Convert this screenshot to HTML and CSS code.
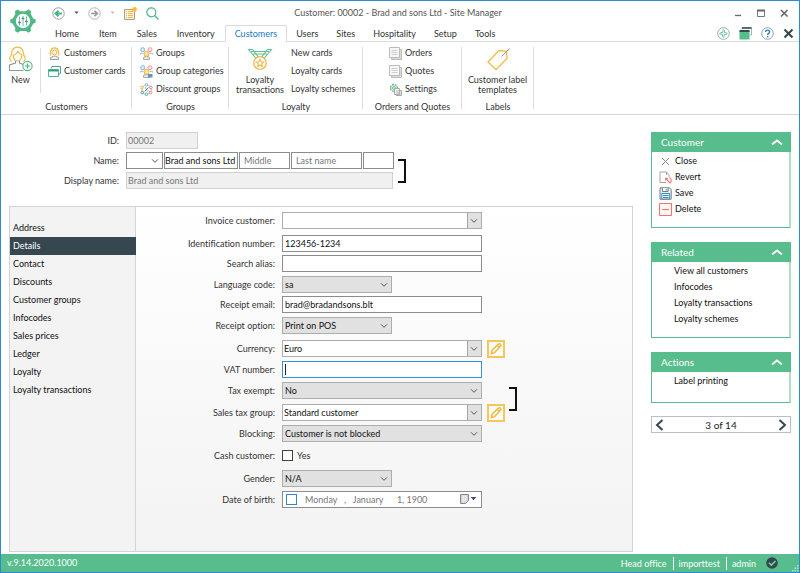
FILE: index.html
```html
<!DOCTYPE html>
<html lang="en">
<head>
<meta charset="utf-8">
<title>Customer: 00002 - Brad and sons Ltd - Site Manager</title>
<link rel="stylesheet" href="styles.css">
</head>
<body>
<svg class="sprite" aria-hidden="true">
  <symbol id="chevron" viewBox="0 0 8 8"><path d="M1 2.3l3 3 3-3" fill="none" stroke="#555" stroke-width="1"/></symbol>
  <symbol id="collapse" viewBox="0 0 12 8"><path d="M1 6.5l5-4 5 4" fill="none" stroke="#fff" stroke-width="1.8"/></symbol>
  <symbol id="pencil" viewBox="0 0 18 18"><path d="M3 15l1-4.500 8-7.800c2-1.500 4.300.9 2.800 2.900l-7.600 8z M10.800 4.500l2.600 2.600" fill="none" stroke="#f5b93a" stroke-width="1.900"/></symbol>
  <symbol id="sheets" viewBox="0 0 13 13"><path d="M2.500 2.500h10v10h-10z" fill="#dcdcdc" stroke="#bbb"/><path d="M.5.500h10v10H.5z" fill="#f7f7f7" stroke="#bbb"/><path d="M2.500 3.500h6M2.500 5.500h6M2.500 7.500h6" stroke="#d0d0d0"/></symbol>
  <symbol id="people" viewBox="0 0 13 13"><circle cx="2.700" cy="2.700" r="2" fill="#e3f2fa" stroke="#7cb8d4"/><circle cx="10" cy="2.700" r="2" fill="#fde8e8" stroke="#f19a98"/><path d="M.5 7.500V6.300h3M12.500 7.500V6.300h-3" fill="none" stroke="#9fbccb"/><path d="M4.300 9.200V6.500a2.200 2.200 0 0 1 4.400 0v2.700z" fill="#ffe3a0" stroke="#f2b63d"/><path d="M3.500 12.500v-2l3-1 3 1v2z" fill="#eee" stroke="#aaa"/></symbol>
</svg>
<div class="window">
  <header class="header">
    <svg class="logo" viewBox="0 0 26 26"><path d="M7.700 1.500l2.400 1.800h5.800l2.400-1.800 2.700 1.600-.3 3 2.500 4.300 2.500 1.200v3l-2.500 1.200-2.500 4.300.3 3-2.700 1.600-2.400-1.800h-5.800l-2.400 1.800L5 23.100l.3-3-2.500-4.300-2.500-1.200v-3l2.500-1.200 2.500-4.300-.3-3z" fill="#4fb886"/><circle cx="13" cy="13" r="7.200" fill="#fff"/><path d="M9.500 8.500v9M13 8v10M16.500 8.500v9" stroke="#6cc09c" stroke-width="1"/><path d="M8.200 14.500h2.600M11.700 10.500h2.600M15.200 13.500h2.600" stroke="#557f79" stroke-width="1.600"/></svg>
    <div class="header-main">
      <div class="titlebar">
        <div class="quick">
          <button aria-label="Back"><svg width="13" height="13" viewBox="0 0 13 13"><circle cx="6.500" cy="6.500" r="5.700" fill="#fff" stroke="#8b9499" stroke-width=".9"/><path d="M10 6.500H4M6.500 3.800L3.600 6.500l2.900 2.700" fill="none" stroke="#3fb57c" stroke-width="1.900"/></svg></button>
          <svg width="5" height="4" viewBox="0 0 5 4"><path d="M.5.500h4L2.500 3z" fill="#555"/></svg>
          <button aria-label="Forward"><svg width="13" height="13" viewBox="0 0 13 13"><circle cx="6.500" cy="6.500" r="5.700" fill="#fff" stroke="#aaa" stroke-width=".9"/><path d="M3 6.500h6M6.500 3.800l2.900 2.700-2.900 2.700" fill="none" stroke="#999" stroke-width="1.700"/></svg></button>
          <svg width="5" height="4" viewBox="0 0 5 4"><path d="M.5.500h4L2.500 3z" fill="#bbb"/></svg>
          <button aria-label="List"><svg width="13" height="13" viewBox="0 0 13 13"><path d="M.5 2.500h10v10H.5z" fill="#fff5dc" stroke="#a9a08b"/><path d="M2 4.500h1M2 6.500h1M2 8.500h1M2 10.500h1M4 4.500h5M4 6.500h5M4 8.500h5M4 10.500h5" stroke="#f0b84a"/><circle cx="10.500" cy="2.500" r="2.400" fill="#f7bb3f"/></svg></button>
          <button aria-label="Search"><svg width="13" height="13" viewBox="0 0 13 13"><circle cx="5.300" cy="5.300" r="4.500" fill="none" stroke="#48b688" stroke-width="1.200"/><path d="M8.500 8.500l4 4" stroke="#48b688" stroke-width="1.300"/></svg></button>
        </div>
        <div class="title">Customer: 00002 - Brad and sons Ltd - Site Manager</div>
        <div class="winctl">
          <button aria-label="Minimize"><svg width="9" height="9" viewBox="0 0 9 9"><path d="M1 6.500h6" stroke="#666" stroke-width="1.300"/></svg></button>
          <button aria-label="Maximize"><svg width="9" height="9" viewBox="0 0 9 9"><path d="M.5 1.500h7v6h-7z" fill="none" stroke="#777"/><path d="M0 1.500h8" stroke="#666" stroke-width="2"/></svg></button>
          <button aria-label="Close"><svg width="9" height="9" viewBox="0 0 9 9"><path d="M1 1l6.500 6.500M7.500 1L1 7.500" stroke="#666" stroke-width="1.600"/></svg></button>
        </div>
      </div>
      <div class="tabrow">
        <nav class="tabs">
          <a href="#">Home</a><a href="#">Item</a><a href="#">Sales</a><a href="#">Inventory</a><a href="#" class="active">Customers</a><a href="#">Users</a><a href="#">Sites</a><a href="#">Hospitality</a><a href="#">Setup</a><a href="#">Tools</a>
        </nav>
        <div class="tools">
          <button aria-label="Sync"><svg width="13" height="13" viewBox="0 0 13 13"><circle cx="6.500" cy="6.500" r="5.800" fill="#fff" stroke="#8fa79d" stroke-width=".9"/><path d="M6.300 2.300L5.600 5.600H3.300M2.300 6.700l3.300.7v2.300M6.700 10.700l.7-3.300h2.300M10.700 6.300l-3.300-.7V3.300" fill="none" stroke="#53bd8c" stroke-width=".9"/></svg></button>
          <button aria-label="Windows"><svg width="13" height="13" viewBox="0 0 13 13"><path d="M3 2.500V.8h9.500V8H10.500" fill="#fff" stroke="#8aa" stroke-width=".8"/><path d="M3 1h9.500" stroke="#37474f" stroke-width="1.500"/><path d="M.5 4h10v8.500H.5z" fill="#57bd8d"/><path d="M.5 4h10" stroke="#37474f" stroke-width="2"/></svg></button>
          <button aria-label="Help"><svg width="13" height="13" viewBox="0 0 13 13"><circle cx="6.500" cy="6.500" r="5.800" fill="#fff" stroke="#84959d" stroke-width=".9"/><path d="M4.600 5c0-2.500 4-2.400 4-.1 0 1.500-2 1.400-2 3" fill="none" stroke="#2f80b8" stroke-width="1.400"/><path d="M5.900 9.700h1.500" stroke="#2f80b8" stroke-width="1.400"/></svg></button>
          <button aria-label="Close view"><svg width="11" height="11" viewBox="0 0 11 11"><path d="M1.500 1.500l8 8M9.500 1.500l-8 8" stroke="#37474f" stroke-width="2.100"/></svg></button>
        </div>
      </div>
    </div>
  </header>

  <div class="ribbon">
    <section class="group g-customers">
      <div class="group-body">
        <button class="big"><svg width="26" height="26" viewBox="0 0 26 26"><path d="M3.500 15.500C1.500 14 1 11 3.300 9.300 3.500 4 6 1.200 9.500 1.200S15.600 4 15.800 9.300c2.200 1.700 1.700 4.700-.3 6.200M5.300 8.500c0 4 1.500 6.500 4.200 6.500s4.300-2.500 4.300-6.500M5.200 9c3-.2 4-2 4.800-3.500 1 1.700 2 2.800 3.900 3.300" fill="none" stroke="#f2b84b" stroke-width="1.200"/><path d="M7.500 15v2L1.500 19v5.500h14M11.500 15v2l4 1.500" fill="none" stroke="#8e979b" stroke-width="1.100"/><circle cx="19.500" cy="20" r="4.600" fill="#fff" stroke="#4db98a" stroke-width="1.100"/><path d="M17 20h5M19.500 17.500v5" stroke="#4db98a" stroke-width="1.200"/></svg><span>New</span></button>
        <div class="col divided">
          <button class="item"><svg width="13" height="13" viewBox="0 0 13 13"><path d="M2.500 8.500C1.500 7 2.500 5 2.800 4 3 2 4.500.8 6.500.8S10 2 10.200 4c.3 1 1.300 3 .3 4.500" fill="#fff3d6" stroke="#f2b84b" stroke-width="1.200"/><circle cx="6.500" cy="5.500" r="2.300" fill="#fff" stroke="#f2b84b"/><path d="M2.500 12.500v-2l3-1.300h2l3 1.300v2z" fill="#eee" stroke="#8e979b" stroke-width=".9"/></svg>Customers</button>
          <button class="item"><svg width="13" height="13" viewBox="0 0 13 13"><path d="M3 3.500l1-2h8.500v7l-2 1" fill="#fff" stroke="#4f9f8a"/><path d="M.5 4.500h10v7H.5z" fill="#fff" stroke="#4db98a"/><path d="M.5 5.500h10" stroke="#3a9d86" stroke-width="2"/></svg>Customer cards</button>
        </div>
      </div>
      <h2>Customers</h2>
    </section>
    <section class="group g-groups">
      <div class="group-body">
        <div class="col">
          <button class="item"><svg width="13" height="13"><use href="#people"/></svg>Groups</button>
          <button class="item"><svg width="13" height="13" viewBox="0 0 13 13"><use href="#people" width="13" height="13"/><path d="M8 9h4.500v3.500H8z" fill="#5a9ab8"/></svg>Group categories</button>
          <button class="item"><svg width="13" height="13" viewBox="0 0 13 13"><circle cx="6.500" cy="6.500" r="4.700" fill="none" stroke="#b9c4c9"/><path d="M4.800 8.500l3.400-4M5 5h.8M7.500 8h.8" stroke="#39697f"/><g fill="#fff"><circle cx="6.500" cy="1.800" r="1.300" stroke="#7cb8d4"/><circle cx="11" cy="4.500" r="1.300" stroke="#f08080"/><circle cx="10.500" cy="9.500" r="1.300" stroke="#f08080"/><circle cx="6.500" cy="11.300" r="1.300" stroke="#4db98a"/><circle cx="2.300" cy="9.500" r="1.300" stroke="#4a95b5"/><circle cx="2" cy="4.500" r="1.300" stroke="#f2b84b"/></g></svg>Discount groups</button>
        </div>
      </div>
      <h2>Groups</h2>
    </section>
    <section class="group g-loyalty">
      <div class="group-body">
        <button class="big"><svg width="26" height="26" viewBox="0 0 26 26"><path d="M1.500 3.500l7.500 9 2-2-5.500-7zM24.500 3.500l-7.500 9-2-2 5.500-7zM4 5.500h18M6 8h14" fill="none" stroke="#62c096" stroke-width="1.100"/><circle cx="13" cy="17" r="6.300" fill="#fff" stroke="#f2b84b" stroke-width="1.300"/><path d="M13 13.300l1.100 2.500 2.700.2-2.100 1.800.7 2.700-2.400-1.500-2.400 1.500.7-2.700L9.200 16l2.700-.2z" fill="none" stroke="#f2b84b" stroke-width="1.100"/></svg><span>Loyalty<br>transactions</span></button>
        <div class="col">
          <button class="item">New cards</button>
          <button class="item">Loyalty cards</button>
          <button class="item">Loyalty schemes</button>
        </div>
      </div>
      <h2>Loyalty</h2>
    </section>
    <section class="group g-orders">
      <div class="group-body">
        <div class="col">
          <button class="item"><svg width="13" height="13"><use href="#sheets"/></svg>Orders</button>
          <button class="item"><svg width="13" height="13"><use href="#sheets"/></svg>Quotes</button>
          <button class="item"><svg width="13" height="13" viewBox="0 0 13 13"><circle cx="5" cy="5" r="3.500" fill="#eaf7f1" stroke="#62b98f" stroke-width="1.400" stroke-dasharray="2 .8"/><circle cx="5" cy="5" r="1.400" fill="#fff" stroke="#62b98f"/><path d="M7.500 7.500h5v5h-5z" fill="#ddd" stroke="#aaa"/><path d="M5.500 5.500h5v6h-5z" fill="#f2f2f2" stroke="#aaa"/><path d="M7 8h3M7 10h3" stroke="#bbb"/></svg>Settings</button>
        </div>
      </div>
      <h2>Orders and Quotes</h2>
    </section>
    <section class="group g-labels">
      <div class="group-body">
        <button class="big"><svg width="26" height="26" viewBox="0 0 26 26"><path d="M3 16L14 4.500l7.500.8.500 7.200L11 23.500z" fill="none" stroke="#f5bd50" stroke-width="1.400"/><path d="M16.500 10.500L24.500 2.500" stroke="#8e979b" stroke-width="1"/></svg><span>Customer label<br>templates</span></button>
      </div>
      <h2>Labels</h2>
    </section>
  </div>

  <main class="content">
    <div class="record">
      <form class="identity">
        <label for="id">ID:</label>
        <div class="line"><input id="id" class="w-id" value="00002" disabled></div>
        <label for="first">Name:</label>
        <div class="line name">
          <span class="combo white w-prefix"><select aria-label="Prefix"><option></option></select><svg width="8" height="8"><use href="#chevron"/></svg></span>
          <input id="first" class="w-first" value="Brad and sons Ltd">
          <input class="w-middle" placeholder="Middle" aria-label="Middle name">
          <input class="w-last" placeholder="Last name" aria-label="Last name">
          <input class="w-suffix" aria-label="Suffix">
        </div>
        <label for="display">Display name:</label>
        <div class="line"><input id="display" class="w-display" value="Brad and sons Ltd" disabled></div>
        <span class="bracket"></span>
      </form>

      <div class="panel">
        <nav class="side">
          <a href="#">Address</a><a href="#" class="active">Details</a><a href="#">Contact</a><a href="#">Discounts</a><a href="#">Customer groups</a><a href="#">Infocodes</a><a href="#">Sales prices</a><a href="#">Ledger</a><a href="#">Loyalty</a><a href="#">Loyalty transactions</a>
        </nav>
        <form class="details">
          <div class="row"><label for="invoice">Invoice customer:</label><span class="combo pick wide"><select id="invoice"><option></option></select><svg width="8" height="8"><use href="#chevron"/></svg></span></div>
          <div class="row gap-l"><label for="ident">Identification number:</label><input id="ident" class="wide" value="123456-1234"></div>
          <div class="row gap-s"><label for="alias">Search alias:</label><input id="alias" class="wide"></div>
          <div class="row"><label for="lang">Language code:</label><span class="combo short"><select id="lang"><option>sa</option></select><svg width="8" height="8"><use href="#chevron"/></svg></span></div>
          <div class="row gap-s"><label for="email">Receipt email:</label><input id="email" class="wide" value="brad@bradandsons.blt"></div>
          <div class="row"><label for="receipt">Receipt option:</label><span class="combo short"><select id="receipt"><option>Print on POS</option></select><svg width="8" height="8"><use href="#chevron"/></svg></span></div>
          <div class="row gap-l"><label for="currency">Currency:</label><span class="combo pick wide"><select id="currency"><option>Euro</option></select><svg width="8" height="8"><use href="#chevron"/></svg></span><button type="button" class="edit" aria-label="Edit currency"><svg width="14" height="14"><use href="#pencil"/></svg></button></div>
          <div class="row"><label for="vat">VAT number:</label><input id="vat" class="wide current"></div>
          <div class="linked">
            <div class="row"><label for="exempt">Tax exempt:</label><span class="combo wide"><select id="exempt"><option>No</option></select><svg width="8" height="8"><use href="#chevron"/></svg></span></div>
            <div class="row gap-m"><label for="taxgroup">Sales tax group:</label><span class="combo pick wide"><select id="taxgroup"><option>Standard customer</option></select><svg width="8" height="8"><use href="#chevron"/></svg></span><button type="button" class="edit" aria-label="Edit sales tax group"><svg width="14" height="14"><use href="#pencil"/></svg></button></div>
            <span class="bracket"></span>
          </div>
          <div class="row"><label for="blocking">Blocking:</label><span class="combo wide"><select id="blocking"><option>Customer is not blocked</option></select><svg width="8" height="8"><use href="#chevron"/></svg></span></div>
          <div class="row gap-m"><label for="cash">Cash customer:</label><input id="cash" type="checkbox"><label class="after" for="cash">Yes</label></div>
          <div class="row gap-l"><label for="gender">Gender:</label><span class="combo short"><select id="gender"><option>N/A</option></select><svg width="8" height="8"><use href="#chevron"/></svg></span></div>
          <div class="row"><label for="dob">Date of birth:</label><span class="datebox wide"><input type="checkbox" class="blue" aria-label="Date of birth known"><input id="dob" value="Monday   ,   January      1, 1900"><button type="button" aria-label="Open calendar"><svg width="17" height="11" viewBox="0 0 17 11"><path d="M.5.500h8v6l-3 3h-5z" fill="#d6d6d6" stroke="#888"/><path d="M2 3h5M2 5h5M2 7h3M3.500 1v8M5.500 1v6" stroke="#f5f5f5" stroke-width=".6"/><path d="M10.500 3h6l-3 3.300z" fill="#3d5272"/></svg></button></span></div>
        </form>
      </div>
    </div>

    <aside class="aside">
      <section class="card tall">
        <h3>Customer<svg width="12" height="8"><use href="#collapse"/></svg></h3>
        <button><svg width="13" height="13" viewBox="0 0 13 13"><path d="M3 3l7 7M10 3l-7 7" stroke="#888" stroke-width="1"/></svg>Close</button>
        <button><svg width="13" height="13" viewBox="0 0 13 13"><path d="M7 11.500H1V1h6.500L10 3.500V6M7.500 1v3" fill="none" stroke="#999" stroke-width=".9"/><path d="M7 7.500l4 4.500c2-1.500 1.500-4-.5-5.500M6.500 9.500l.2-2.300 2.300.3" fill="none" stroke="#f07f7b" stroke-width="1.200"/></svg>Revert</button>
        <button><svg width="13" height="13" viewBox="0 0 13 13"><path d="M1 .8h9.500l1.700 1.700v9.700H1z" fill="#e5f1f7" stroke="#62717a" stroke-width=".9"/><path d="M3.500 1v3.500h5.500V1M7.300 1.800v1.700" fill="#fff" stroke="#62717a" stroke-width=".9"/><path d="M2.800 6.500h7.800v5.500H2.800z" fill="#fff" stroke="#3d8db5"/><path d="M4 8.500h5.500M4 10.500h5.500" stroke="#3d8db5"/></svg>Save</button>
        <button><svg width="13" height="13" viewBox="0 0 13 13"><path d="M.5.500h12v12H.5z" fill="#fff5f5" stroke="#f0736e"/><path d="M3 6.500h7" stroke="#f0736e"/></svg>Delete</button>
      </section>
      <section class="card tall plain">
        <h3>Related<svg width="12" height="8"><use href="#collapse"/></svg></h3>
        <button>View all customers</button>
        <button>Infocodes</button>
        <button>Loyalty transactions</button>
        <button>Loyalty schemes</button>
      </section>
      <section class="card plain">
        <h3>Actions<svg width="12" height="8"><use href="#collapse"/></svg></h3>
        <button>Label printing</button>
      </section>
      <div class="pager">
        <button aria-label="Previous"><svg width="9" height="12" viewBox="0 0 9 12"><path d="M7.500 1L2 6l5.500 5" fill="none" stroke="#37474f" stroke-width="2"/></svg></button>
        <span>3 of 14</span>
        <button aria-label="Next"><svg width="9" height="12" viewBox="0 0 9 12"><path d="M1.500 1L7 6l-5.500 5" fill="none" stroke="#37474f" stroke-width="2"/></svg></button>
      </div>
    </aside>
  </main>

  <footer class="status">
    <span class="version">v.9.14.2020.1000</span>
    <span class="cell">Head office</span>
    <span class="cell">importtest</span>
    <span class="cell">admin</span>
    <svg width="12" height="12" viewBox="0 0 12 12"><circle cx="6" cy="6" r="5.800" fill="#37474f"/><path d="M3 5.800l2.300 2.400L9.500 4" fill="none" stroke="#6fdcaa" stroke-width="1.600"/></svg>
    <svg class="grip" width="7" height="7" viewBox="0 0 7 7"><path d="M5 0h1.500v1.500H5zM2.500 2.500H4V4H2.500zM5 2.500h1.500V4H5zM0 5h1.500v1.500H0zM2.500 5H4v1.500H2.500zM5 5h1.500v1.500H5z" fill="#b5dfcc"/></svg>
  </footer>
</div>
</body>
</html>
```
FILE: styles.css
```css
* { box-sizing: border-box; }
body {
  margin: 0;
  font: 9px/12px Lato, "Noto Sans", sans-serif;
  font-variant-ligatures: none;
  color: #333;
}
button, input, select { font: inherit; color: inherit; margin: 0; padding: 0; border: 0; background: none; }
svg { display: block; flex: none; }
a { color: inherit; text-decoration: none; }
h2, h3 { margin: 0; font: inherit; }
.sprite { position: absolute; width: 0; height: 0; }

.window {
  display: flex;
  flex-direction: column;
  min-height: 100vh;
  border: 1px solid #2f8ad0;
  background: #fff;
}

/* Title bar and tabs */
.header { display: flex; border-bottom: 1px solid #dcdcdc; }
.logo { width: 26px; height: 26px; margin: 7px 9px 0; }
.header-main { flex: 1; min-width: 0; }
.titlebar { display: grid; grid-template-columns: 1fr auto 1fr; align-items: center; height: 24px; }
.quick { display: flex; align-items: center; gap: 9px; padding-left: 7px; }
.title { color: #555; padding-right: 48px; }
.winctl { display: flex; justify-content: flex-end; gap: 14px; padding-right: 10px; }
.tabrow { display: flex; justify-content: space-between; height: 16px; }
.tabs { display: flex; margin-bottom: -1px; }
.tabs a { padding: 2px 10px 0; border-top: 1px solid transparent; }
.tabs .active { color: #1979ca; background: #fff; border: 1px solid #dcdcdc; border-bottom: 0; }
.tabs .active, .tabs .active ~ a { padding-left: 9px; padding-right: 9px; }
.tools { display: flex; align-items: center; gap: 9px; padding-right: 5px; }

/* Ribbon */
.ribbon { display: flex; border-bottom: 1px solid #d5d5d5; }
.group {
  display: flex;
  flex-direction: column;
  height: 72px;
  padding-top: 2px;
  background: linear-gradient(#dedede, #dedede) right 5px / 1px 62px no-repeat;
}
.group-body { display: flex; flex: none; height: 54px; }
.group h2 { height: 16px; line-height: 18px; text-align: center; white-space: nowrap; }
.col { display: flex; flex-direction: column; }
.divided { background: linear-gradient(#dedede, #dedede) left 4px / 1px 45px no-repeat; padding-left: 8px; }
.item { display: flex; align-items: center; gap: 3px; height: 18px; white-space: nowrap; }
.big { display: flex; flex-direction: column; align-items: center; padding-top: 2px; white-space: nowrap; }
.big span { padding-top: 3px; line-height: 10px; }
.g-customers { width: 131px; }
.g-customers .big { width: 39px; }
.g-groups { width: 97px; }
.g-groups .col { padding-left: 8px; }
.g-loyalty { width: 134px; }
.g-loyalty .big { width: 62px; }
.g-orders { width: 99px; }
.g-orders .col { padding-left: 26px; }
.g-labels { width: 72px; }
.g-labels .big { width: 71px; }

/* Record header */
.content { flex: 1; display: flex; gap: 18px; padding: 17px 8px 2px; }
.record { flex: 1; display: flex; flex-direction: column; min-width: 0; }
.identity {
  display: grid;
  grid-template-columns: 110px max-content max-content;
  column-gap: 7px;
  row-gap: 3px;
  align-items: center;
}
.identity label { grid-column: 1; text-align: right; }
.line { display: flex; gap: 1px; grid-column: 2; }
.identity .bracket { grid-column: 3; grid-row: 2 / 4; margin-left: -3px; }
.bracket { width: 8px; height: 24px; border: 2px solid #111; border-left: 0; }

input, .combo, .datebox { height: 17px; border: 1px solid #8c8c8c; background: #fff; color: #111; }
input { padding: 0 2px; min-width: 0; }
input::placeholder { color: #777; opacity: 1; padding-left: 2px; }
input:disabled { background: #f0f0f0; border-color: #d0d0d0; color: #777; padding-left: 1px; }
input:focus, select:focus { outline: 0; }
.w-id { width: 72px; }
.w-prefix { width: 37px; }
.w-first { width: 74px; padding: 0; }
.w-middle { width: 51px; }
.w-last { width: 71px; }
.w-suffix { width: 31px; }
.w-display { width: 267px; }

.combo { position: relative; display: flex; background: #e1e1e1; border-color: #adadad; }
.combo select { flex: 1; appearance: none; padding-left: 2px; min-width: 0; }
.combo svg { position: absolute; right: 3px; top: 4px; pointer-events: none; }
.combo.white { background: #fff; border-color: #8c8c8c; }
.combo.pick { background: linear-gradient(#a5a5a5, #a5a5a5) right 13px top / 1px 100% no-repeat, linear-gradient(#e1e1e1, #e1e1e1) right / 13px 100% no-repeat, #fff; }
.combo.pick select { padding-left: 1px; }

/* Section list and details */
.panel {
  flex: 1;
  display: flex;
  margin-top: 17px;
  border: 1px solid #d4d4d4;
}
.side { width: 126px; padding-top: 12px; background: #f3f3f3; border-right: 1px solid #d4d4d4; color: #111; }
.side a { display: block; height: 18px; line-height: 18px; padding-left: 3px; }
.side .active { background: #37474f; color: #fff; margin-right: -1px; }
.details { flex: 1; padding: 5px 0; background: linear-gradient(#fff, #f3f3f3); }
.row { display: flex; align-items: center; height: 17px; margin-top: 4px; }
.row:first-child { margin-top: 0; }
.row > label:first-child { width: 139px; margin-right: 7px; text-align: right; white-space: nowrap; }
.details .gap-s { margin-top: 3px; }
.details .gap-m { margin-top: 5px; }
.details .gap-l { margin-top: 6px; }
.wide { width: 200px; }
.short { width: 110px; }
.linked { position: relative; margin-top: 4px; }
.linked .bracket { position: absolute; left: 373px; top: 5px; }
.current { border-color: #3a8fd9; background: linear-gradient(#222, #222) 2px 2px / 1px 11px no-repeat, #fff; }
.edit { display: grid; place-items: center; width: 18px; height: 18px; margin-left: 5px; border: 2px solid #f8c55a; background: #fff; }
input[type="checkbox"] { appearance: none; width: 11px; height: 11px; padding: 0; border-color: #444; }
input.blue { border-color: #2d86d6; }
.after { padding-left: 4px; }
.datebox { display: flex; align-items: center; padding: 0 4px 0 3px; }
.datebox input:not(.blue) { flex: 1; height: 15px; border: 0; padding-left: 8px; color: #777; }

/* Task cards */
.aside { width: 140px; display: flex; flex-direction: column; gap: 14px; }
.card { min-height: 51px; border: 1px solid #57bd8d; border-right: 2px solid #b0dfc9; border-top: 0; color: #111; padding-bottom: 10px; }
.card h3 { display: flex; justify-content: space-between; align-items: center; height: 20px; margin: 0 -2px 1px -1px; padding: 0 8px 0 10px; background: #57bd8d; color: #fff; font-size: 10px; }
.card button { display: flex; align-items: center; gap: 3px; width: 100%; height: 16px; padding-left: 7px; }
.card.plain button { padding-left: 22px; }
.card.tall { min-height: 96px; }
.pager { display: flex; align-items: center; justify-content: space-between; height: 17px; margin-top: -1px; padding: 0 3px; border: 1px solid #b9c0c3; color: #222; font-size: 10px; }

/* Status bar */
.status { display: flex; align-items: center; height: 18px; padding-left: 6px; background: #57bd8d; color: #fff; }
.version { flex: 1; }
.cell { padding: 0 6px; line-height: 13px; }
.cell + .cell { border-left: 1px solid #fff; padding-left: 5px; }
.cell + svg { margin-left: 4px; }
.grip { align-self: flex-end; margin-left: 14px; }
```
